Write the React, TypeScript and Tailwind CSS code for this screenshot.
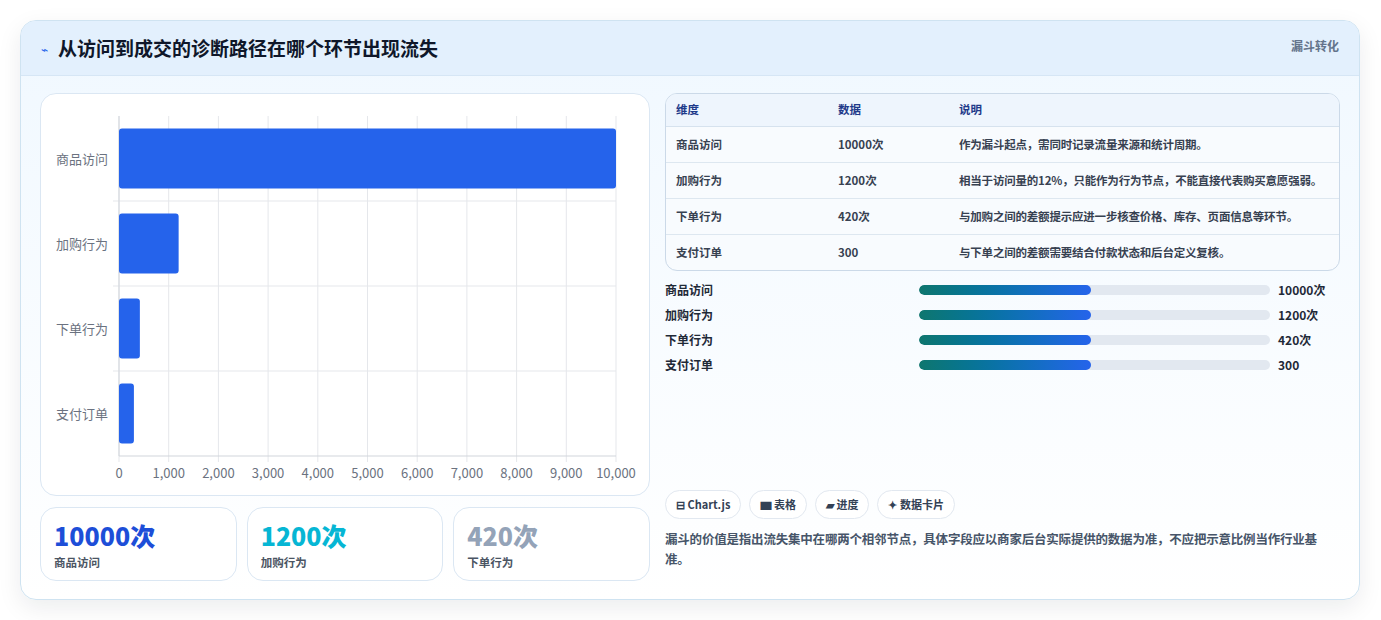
const font = { fontFamily: '"Noto Sans CJK SC", "Noto Sans", sans-serif' }

const rows = [
  { name: '商品访问', value: '10000次', n: 10000, note: '作为漏斗起点，需同时记录流量来源和统计周期。' },
  { name: '加购行为', value: '1200次', n: 1200, note: '相当于访问量的12%，只能作为行为节点，不能直接代表购买意愿强弱。' },
  { name: '下单行为', value: '420次', n: 420, note: '与加购之间的差额提示应进一步核查价格、库存、页面信息等环节。' },
  { name: '支付订单', value: '300', n: 300, note: '与下单之间的差额需要结合付款状态和后台定义复核。' },
]

const Chart = () => {
  const x0 = 118, x1 = 615, y0 = 115, y1 = 455
  const w = x1 - x0
  const rowH = (y1 - y0) / 4
  return (
    <svg width="610" height="403" viewBox="40 93 610 403" className="block">
      {Array.from({ length: 11 }).map((_, i) => {
        const x = x0 + (w * i) / 10
        return (
          <g key={i}>
            <line x1={x} x2={x} y1={y0} y2={y1 + 6} stroke="#e5e7eb" />
            <text x={x} y={477} fontSize="13" fill="#6b7280" textAnchor="middle" style={font}>
              {(i * 1000).toLocaleString('en-US')}
            </text>
          </g>
        )
      })}
      {[1, 2, 3].map(i => (
        <line key={i} x1={x0 - 6} x2={x1} y1={y0 + rowH * i} y2={y0 + rowH * i} stroke="#e5e7eb" />
      ))}
      <line x1={x0} x2={x1} y1={y1} y2={y1} stroke="#d1d5db" />
      <line x1={x0} x2={x0} y1={y0} y2={y1} stroke="#d1d5db" />
      {rows.map((r, i) => {
        const cy = y0 + rowH * i + rowH / 2
        return (
          <g key={r.name}>
            <text x={107} y={cy + 5} fontSize="13" fill="#6b7280" textAnchor="end" style={font}>{r.name}</text>
            <rect x={x0} y={cy - 30} width={(w * r.n) / 10000} height={60} rx={3} fill="#2563eb" />
          </g>
        )
      })}
    </svg>
  )
}

const Stat = ({ v, l, c }: { v: string; l: string; c: string }) => (
  <div className="flex-1 rounded-2xl border border-[#dbe7f3] bg-white px-[13px] pt-[10px] h-[74px]">
    <div className={`text-[25px] font-extrabold leading-[34px] ${c}`}>{v}</div>
    <div className="text-[11.5px] font-semibold text-[#4b5563] mt-[2px]">{l}</div>
  </div>
)

export default function App() {
  return (
    <div className="w-[1381px] h-[620px] bg-white pt-[20px] pl-[20px]" style={font}>
      <div className="w-[1340px] h-[580px] rounded-2xl border border-[#cfe3f1] bg-gradient-to-b from-[#f0f8ff] to-white shadow-[0_8px_24px_rgba(15,23,42,0.08)] overflow-hidden flex flex-col">
        <div className="h-[55px] shrink-0 bg-[#e3f0fd] border-b border-[#d6e6f5] flex items-start justify-between px-[20px]">
          <div className="flex items-center gap-[10px] h-[55px]">
            <span className="text-[#2563eb] text-[12px]">⌁</span>
            <h1 className="text-[19px] font-bold text-[#0f172a]">从访问到成交的诊断路径在哪个环节出现流失</h1>
          </div>
          <span className="text-[12px] font-bold text-[#64748b] mt-[16px]">漏斗转化</span>
        </div>
        <div className="flex gap-[15px] px-[19px] pt-[17px]">
          <div className="w-[610px] flex flex-col gap-[11px]">
            <div className="rounded-2xl border border-[#dbe7f3] bg-white overflow-hidden h-[403px]">
              <Chart />
            </div>
            <div className="flex gap-[10px]">
              <Stat v="10000次" l="商品访问" c="text-[#1d4ed8]" />
              <Stat v="1200次" l="加购行为" c="text-[#06b6d4]" />
              <Stat v="420次" l="下单行为" c="text-[#94a3b8]" />
            </div>
          </div>
          <div className="flex-1 flex flex-col">
            <div className="rounded-xl border border-[#cbd9e8] overflow-hidden bg-[#f8fbfe] text-[11.5px]">
              <div className="grid grid-cols-[162px_121px_1fr] h-[33px] items-center bg-[#eef5fd] border-b border-[#d6e2ee] px-[10px] font-bold text-[#1e3a8a]">
                <div>维度</div><div>数据</div><div>说明</div>
              </div>
              {rows.map((r, i) => (
                <div key={r.name} className={`grid grid-cols-[162px_121px_1fr] items-start px-[10px] py-[9px] leading-[17px] font-semibold text-[#374151] ${i < 3 ? 'border-b border-[#dde7f0]' : ''}`}>
                  <div>{r.name}</div><div>{r.value}</div><div className="pr-[6px] tracking-[-0.2px]">{r.note}</div>
                </div>
              ))}
            </div>
            <div className="flex flex-col gap-[7px] mt-[10px]">
              {rows.map(r => (
                <div key={r.name} className="grid grid-cols-[254px_351px_1fr] items-center h-[18px] text-[12px] font-bold text-[#1f2937]">
                  <div>{r.name}</div>
                  <div className="h-[10px] rounded-full bg-[#e2e8f0] overflow-hidden">
                    <div className="h-full w-[49%] rounded-full bg-gradient-to-r from-[#0f766e] to-[#2563eb]" />
                  </div>
                  <div className="pl-[8px]">{r.value}</div>
                </div>
              ))}
            </div>
            <div className="flex gap-[8px] mt-[116px]">
              {['⊟ Chart.js', '▆ 表格', '▰ 进度', '✦ 数据卡片'].map(t => (
                <span key={t} className="h-[29px] px-[10px] flex items-center rounded-full border border-[#e2e8f0] bg-white text-[11px] font-bold text-[#334155]">{t}</span>
              ))}
            </div>
            <p className="mt-[10px] text-[12.5px] leading-[20px] font-semibold text-[#475569] tracking-[-0.2px]">
              漏斗的价值是指出流失集中在哪两个相邻节点，具体字段应以商家后台实际提供的数据为准，不应把示意比例当作行业基准。
            </p>
          </div>
        </div>
      </div>
    </div>
  )
}
